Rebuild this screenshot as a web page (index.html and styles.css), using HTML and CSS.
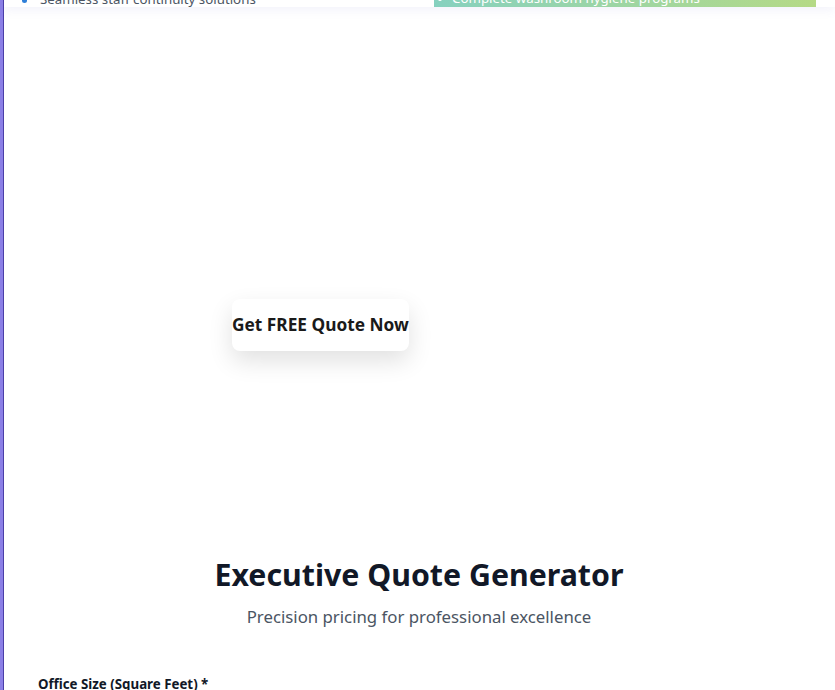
FILE: index.html
```html
<!DOCTYPE html>
<html lang="en">
<head>
<meta charset="utf-8">
<title>Executive Quote Generator</title>
<link rel="stylesheet" href="styles.css">
</head>
<body>
<div class="page">
  <section class="features">
    <ul class="feature-list">
      <li>Seamless staff continuity solutions</li>
    </ul>
    <div class="feature-card">
      <ul class="card-list">
        <li>Complete washroom hygiene programs</li>
      </ul>
    </div>
  </section>

  <section class="cta">
    <div class="cta-inner">
      <button class="cta-button" type="button">Get FREE Quote Now</button>
    </div>
  </section>

  <section class="quote">
    <h1 class="quote-title">Executive Quote Generator</h1>
    <p class="quote-sub">Precision pricing for professional excellence</p>
    <form class="quote-form">
      <label class="field-label">Office Size (Square Feet) *</label>
    </form>
  </section>
</div>
</body>
</html>
```

FILE: styles.css
```css
* { box-sizing: border-box; }
html, body { margin: 0; padding: 0; background: #ffffff; }
body {
  font-family: "Noto Sans", "Open Sans", sans-serif;
  color: #1f2937;
  overflow: hidden;
}
.page {
  min-height: 690px;
  border-left: 3px solid #8b7fe6;
  box-shadow: inset 1px 0 0 #4b3fa8;
}
.features {
  display: grid;
  grid-template-columns: 431px 382px;
  margin-top: -16px;
  height: 23px;
  box-shadow: 0 4px 10px rgba(120, 110, 200, 0.08);
  position: relative;
}
.feature-list, .card-list {
  list-style: none;
  margin: 0;
  padding: 0;
}
.feature-list {
  padding-top: 5px;
}
.feature-list li {
  font-size: 13.3px;
  line-height: 20px;
  color: #4b5563;
  padding-left: 37px;
  position: relative;
}
.feature-list li::before {
  content: "";
  position: absolute;
  left: 19px;
  top: 9px;
  width: 5px;
  height: 5px;
  border-radius: 50%;
  background: #2f7fd8;
}
.feature-card {
  background: linear-gradient(90deg, #86d1bf 0%, #b5da86 100%);
  height: 23px;
  padding-top: 3.5px;
}
.card-list li {
  font-size: 13.3px;
  line-height: 20px;
  color: #ffffff;
  padding-left: 18px;
  position: relative;
}
.card-list li::before {
  content: "";
  position: absolute;
  left: 4px;
  top: 9px;
  width: 4px;
  height: 4px;
  border-radius: 50%;
  background: #ffffff;
}
.cta {
  padding-top: 292px;
  height: 548px;
}
.cta-inner {
  padding-left: 229px;
}
.cta-button {
  font-family: inherit;
  font-size: 17.3px;
  font-weight: 700;
  color: #1a1a1a;
  background: #ffffff;
  border: 0;
  border-radius: 8px;
  padding: 12px 0;
  line-height: 28px;
  box-shadow: 0 10px 25px rgba(0, 0, 0, 0.12);
  cursor: pointer;
}
.quote {
  text-align: center;
}
.quote-title {
  margin: 0;
  font-size: 30.3px;
  line-height: 40px;
  font-weight: 700;
  color: #111827;
}
.quote-sub {
  margin: 8px 0 0;
  font-size: 16.8px;
  line-height: 28px;
  color: #4b5563;
}
.quote-form {
  text-align: left;
  padding: 43px 35px 0;
}
.field-label {
  display: block;
  font-size: 13.3px;
  font-weight: 700;
  line-height: 20px;
  color: #111827;
}
```
